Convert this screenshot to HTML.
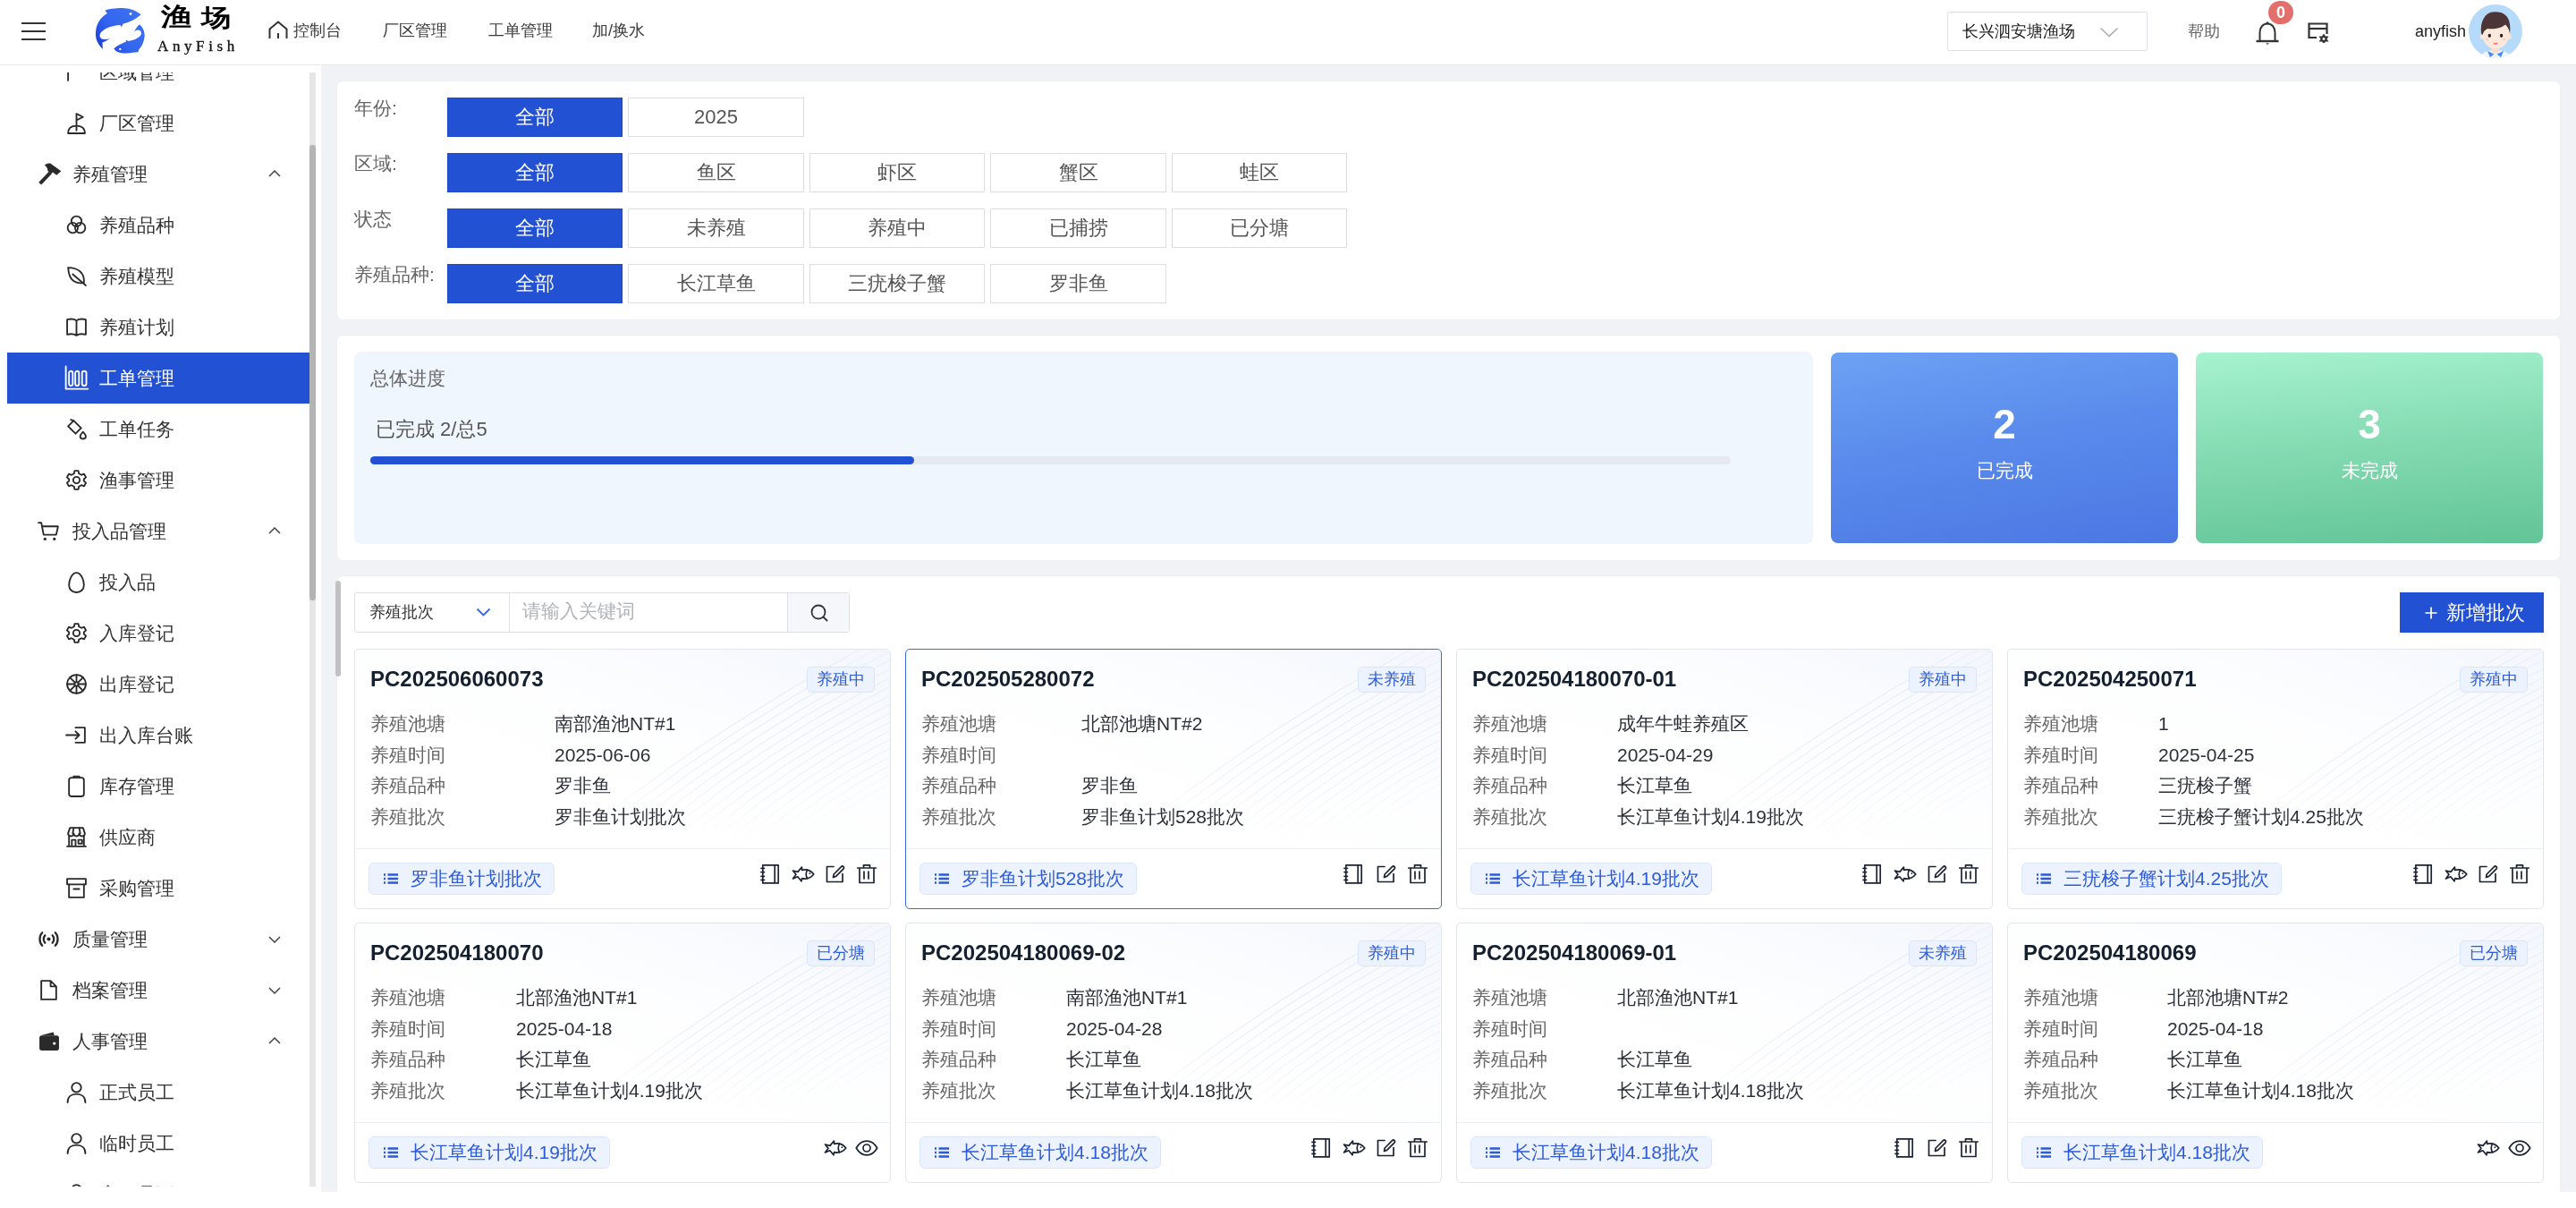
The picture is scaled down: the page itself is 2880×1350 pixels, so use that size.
<!DOCTYPE html><html><head><meta charset="utf-8"><title>AnyFish</title><style>
*{box-sizing:border-box;margin:0;padding:0}
html,body{width:2880px;height:1350px;overflow:hidden;background:#fff;font-family:"Liberation Sans",sans-serif;color:#333}
body{will-change:transform}
.a{position:absolute}
.hdr{left:0;top:0;width:2880px;height:72px;background:#fff;border-bottom:1px solid #e6e6e6;height:73px}
.ham{left:24px;width:27px;height:2.2px;background:#333}
.nav{top:20px;height:28px;line-height:28px;font-size:18px;color:#3a3a3a;white-space:nowrap}
.side{left:0;top:81px;width:359px;height:1245px;background:#fff;overflow:hidden}
.mi{left:0;width:346px;height:57px;font-size:21px;color:#333;white-space:nowrap}
.mi .t{position:absolute;top:0;line-height:57px}
.mi svg{position:absolute}
.mi.act{left:8px;width:338px;background:#2351d3;color:#fff}
.main{left:359px;top:73px;width:2521px;height:1259px;background:#f0f2f5;overflow:hidden}
.card{background:#fff;border-radius:6px;box-shadow:0 0 1px rgba(0,0,0,.08)}
.lbl{font-size:21px;color:#666;white-space:nowrap}
.fb{width:196px;height:44px;line-height:42px;text-align:center;font-size:22px;color:#555;border:1px solid #dedede;background:#fff;white-space:nowrap}
.fb.on{background:#2351d3;border-color:#1e49c9;color:#fff}
.bc{width:600px;height:291px;border:1px solid #e3e5e9;border-radius:5px;background:#fff;overflow:hidden}
.bc.sel{border-color:#3a68df}
.bt{left:17px;top:19px;line-height:28px;font-size:24px;font-weight:bold;color:#15202f;white-space:nowrap}
.st{top:19px;height:29px;line-height:27px;padding:0 10px;font-size:18px;color:#2d5ad6;background:#edf3fe;border:1px solid #d9e5fb;border-radius:5px;white-space:nowrap}
.rl{left:17px;font-size:21px;color:#666;line-height:30px;white-space:nowrap}
.rv{font-size:21px;color:#2b2f38;line-height:30px;white-space:nowrap}
.dv{left:0;top:222px;width:600px;height:1px;background:#eceef3}
.ft{left:15px;top:238px;height:36px;line-height:34px;padding:0 13px 0 46px;font-size:21px;color:#2d5ad6;background:#edf3fe;border:1px solid #dbe6fb;border-radius:6px;white-space:nowrap}
.ic{stroke:#1c2433;fill:none;stroke-width:1.7;stroke-linecap:round;stroke-linejoin:round}
</style></head><body>
<div class="a hdr"></div>
<div class="a ham" style="top:25.2px"></div>
<div class="a ham" style="top:34.2px"></div>
<div class="a ham" style="top:43.2px"></div>
<svg class="a" style="left:100px;top:4px" width="70" height="60" viewBox="100 4 70 60">
<defs><linearGradient id="lg" gradientUnits="userSpaceOnUse" x1="158" y1="12" x2="108" y2="52"><stop offset="0" stop-color="#3f73f3"/><stop offset="0.6" stop-color="#3264ee"/><stop offset="1" stop-color="#1c3dd8"/></linearGradient></defs>
<path fill="url(#lg)" d="M117.4 11.5 C122 10 131 8.8 139.7 9.2 C147 9.6 153 12.5 157.6 16.2 C152 21 145 25 137.8 26.4 L135.8 30.3 L134.5 27.9 C126 28.3 118 31 113.5 35.5 C110.5 39 111 42.5 114.9 43.7 C117.5 44.3 120.5 43.8 122.8 43.2 C120 45 117 46.5 114.4 47.4 L114.9 54.7 C109 49.5 106.5 43 107 36.3 C107.5 27 112 19.5 119.9 14.9 Z"/>
<path fill="url(#lg)" d="M127.3 54.5 C130 51.5 135 49 141 46.5 L140.7 44.5 L143.5 46 C148 45.5 153 43.5 156.5 40.5 C158.8 38.3 158.5 35 155.5 33.8 C153.5 33 151.5 34 150.2 35.8 C151 33 153 30 156.1 27.3 C160 31 162 36 161.6 40.5 C161 47 158.5 52 155.5 55 L154.3 58.2 L150 58.6 C144 60 136 60 132 58.2 C130 57.5 128.5 56 127.3 54.5 Z"/>
<circle cx="146" cy="15.5" r="1.4" fill="#fff"/><circle cx="134.3" cy="54.9" r="1.2" fill="#fff"/>
</svg>
<div class="a" style="left:180px;top:5px;font-family:'Liberation Serif',serif;font-weight:900;font-size:28px;line-height:28px;color:#000;transform:scale(1.24,1.0);transform-origin:0 0;white-space:nowrap">渔</div>
<div class="a" style="left:225px;top:7px;font-family:'Liberation Serif',serif;font-weight:900;font-size:28px;line-height:28px;color:#000;transform:scale(1.17,0.95);transform-origin:0 0;white-space:nowrap">场</div>
<div class="a" style="left:176px;top:42px;font-family:'Liberation Serif',serif;font-size:17px;line-height:20px;color:#111;letter-spacing:4.6px;-webkit-text-stroke:0.35px #111;white-space:nowrap">AnyFish</div>
<svg class="a" style="left:300px;top:23px" width="22" height="21" viewBox="0 0 22 21"><path d="M1.5 20 V9.5 L11 1.5 L20.5 9.5 V20 M11 14 V20" fill="none" stroke="#333" stroke-width="2"/></svg>
<div class="a nav" style="left:328px">控制台</div>
<div class="a nav" style="left:428px">厂区管理</div>
<div class="a nav" style="left:546px">工单管理</div>
<div class="a nav" style="left:662px">加/换水</div>
<div class="a" style="left:2177px;top:13px;width:224px;height:44px;border:1px solid #dcdfe6;border-radius:2px;background:#fff"></div>
<div class="a nav" style="left:2194px;top:21px;color:#222">长兴泗安塘渔场</div>
<svg class="a" style="left:2347px;top:30px" width="22" height="12" viewBox="0 0 22 12"><path d="M1.5 1.5 L11 10.5 L20.5 1.5" fill="none" stroke="#aaa" stroke-width="1.6"/></svg>
<div class="a nav" style="left:2446px;top:21px;color:#666">帮助</div>
<svg class="a" style="left:2521px;top:23px" width="28" height="28" viewBox="0 0 28 28"><path d="M5.5 22.5 V13.5 C5.5 7.5 9 3.5 14 3.5 C19 3.5 22.5 7.5 22.5 13.5 V22.5" fill="none" stroke="#333" stroke-width="2"/><path d="M1.5 23 H26.5" stroke="#333" stroke-width="2.4"/><circle cx="14" cy="2.8" r="1.5" fill="#333"/><path d="M12.3 25.3 H15.7 L14 27 Z" fill="#333"/></svg>
<div class="a" style="left:2536px;top:1px;width:28px;height:26px;border-radius:14px;background:#e36f6c;color:#fff;font-size:18px;font-weight:bold;text-align:center;line-height:27px">0</div>
<svg class="a" style="left:2580px;top:25px" width="25" height="23" viewBox="0 0 25 23"><path d="M10 17 H1.5 V1.5 H21.5 V13" fill="none" stroke="#333" stroke-width="2.2"/><path d="M1.5 7 H21.5" stroke="#333" stroke-width="2.2"/><path d="M18 12.5 L20 15.5 H23.5 L21.5 18.5 L23.5 21.5 H20 L18 24 L16 21.5 H12.5 L14.5 18.5 L12.5 15.5 H16 Z" fill="#333"/><circle cx="18" cy="18.5" r="1.4" fill="#fff"/></svg>
<div class="a nav" style="left:2700px;top:21px;color:#222">anyfish</div>
<svg class="a" style="left:2760px;top:5px" width="60" height="60" viewBox="0 0 60 60">
<defs><clipPath id="avc"><circle cx="30" cy="30" r="30"/></clipPath></defs>
<circle cx="30" cy="30" r="30" fill="#b6dbfa"/>
<g clip-path="url(#avc)">
<path d="M12 62 C13 55 19 51 30 51 C41 51 47 55 48 62 Z" fill="#eef5fd"/>
<path d="M21 52 L28.5 55.5 L24 59 Z M39 52 L31.5 55.5 L36 59 Z" fill="#4a8af0"/>
<path d="M26 46 H34 V53 L30 55 L26 53 Z" fill="#f6dccb"/>
<ellipse cx="14.8" cy="36" rx="2.2" ry="3" fill="#f8e2d2"/><ellipse cx="45.6" cy="36" rx="2.2" ry="3" fill="#f8e2d2"/>
<path d="M15 30 C15 18 21 14 30.2 14 C39.4 14 45.6 18 45.6 30 C45.6 42 39.4 49.5 30.2 49.5 C21 49.5 15 42 15 30 Z" fill="#fce9dc"/>
<path d="M14.2 33 C12 19 18.5 8.2 30 8.2 C41.5 8.2 48 16 46 32 C45 28 43.5 24.5 41 22.5 C37.5 26 29.5 28 21 27 C18.5 28.5 16.5 30 15.5 34 Z" fill="#4b3537"/>
<path d="M18 14 C20 11 23 9.5 26 9" stroke="#5e4446" stroke-width="1" fill="none"/>
<ellipse cx="23.3" cy="34.8" rx="1.7" ry="2.1" fill="#2b2323"/><ellipse cx="36.6" cy="34.8" rx="1.7" ry="2.1" fill="#2b2323"/>
<ellipse cx="20.5" cy="39" rx="2.2" ry="1.3" fill="#f7c9c0" opacity=".8"/><ellipse cx="39.5" cy="39" rx="2.2" ry="1.3" fill="#f7c9c0" opacity=".8"/>
<path d="M28.4 43.4 Q30.2 44.6 32 43.4" stroke="#ea6b6b" stroke-width="1.3" fill="none" stroke-linecap="round"/>
</g></svg>
<div class="a side">
<div class="a mi" style="top:-29px">
<svg style="left:73px;top:16px;overflow:visible" width="25" height="25" viewBox="0 0 24 24"><path d="M3 3 V21" stroke="#2a2a2a" fill="none" stroke-width="1.8" stroke-linecap="round" stroke-linejoin="round"/></svg>
<div class="t" style="left:111px">区域管理</div>
</div>
<div class="a mi" style="top:28px">
<svg style="left:73px;top:16px;overflow:visible" width="25" height="25" viewBox="0 0 24 24"><path d="M12 20 V2 L19 5.5 L12 9" stroke="#2a2a2a" fill="none" stroke-width="1.8" stroke-linecap="round" stroke-linejoin="round"/><path d="M3 23 C3 17 7 15 12 15 C17 15 21 17 21 23 Z" stroke="#2a2a2a" fill="none" stroke-width="1.8" stroke-linecap="round" stroke-linejoin="round"/></svg>
<div class="t" style="left:111px">厂区管理</div>
</div>
<div class="a mi" style="top:85px">
<svg style="left:42px;top:16px;overflow:visible" width="25" height="25" viewBox="0 0 24 24"><path d="M2.6 22.3 L13.6 10.6" stroke="#2a2a2a" stroke-width="3.8" stroke-linecap="butt"/><path d="M7.6 2.5 C9.5 1 12 0.4 13.9 0.6 L25.3 8.8 L20.3 13.3 L16.4 10.1 L14.5 12 L10.8 8.4 C11 6.3 9.8 4.2 7.6 2.5 Z" fill="#2a2a2a"/></svg>
<div class="t" style="left:81px">养殖管理</div>
<svg style="left:300px;top:24px" width="14" height="8" viewBox="0 0 14 8"><path d="M1 7 L7 1 L13 7" fill="none" stroke="#444" stroke-width="1.5"/></svg>
</div>
<div class="a mi" style="top:142px">
<svg style="left:73px;top:16px;overflow:visible" width="25" height="25" viewBox="0 0 24 24"><circle cx="12" cy="8" r="5.5" stroke="#2a2a2a" fill="none" stroke-width="1.8" stroke-linecap="round" stroke-linejoin="round"/><circle cx="8" cy="15" r="5.5" stroke="#2a2a2a" fill="none" stroke-width="1.8" stroke-linecap="round" stroke-linejoin="round"/><circle cx="16" cy="15" r="5.5" stroke="#2a2a2a" fill="none" stroke-width="1.8" stroke-linecap="round" stroke-linejoin="round"/></svg>
<div class="t" style="left:111px">养殖品种</div>
</div>
<div class="a mi" style="top:199px">
<svg style="left:73px;top:16px;overflow:visible" width="25" height="25" viewBox="0 0 24 24"><path d="M3 3 C14 3 21 9 20 19 C12 21 4 18 3 3 Z" stroke="#2a2a2a" fill="none" stroke-width="1.8" stroke-linecap="round" stroke-linejoin="round"/><path d="M8 10 L22 22" stroke="#2a2a2a" fill="none" stroke-width="1.8" stroke-linecap="round" stroke-linejoin="round"/></svg>
<div class="t" style="left:111px">养殖模型</div>
</div>
<div class="a mi" style="top:256px">
<svg style="left:73px;top:16px;overflow:visible" width="25" height="25" viewBox="0 0 24 24"><path d="M2 4 C6 3 9 3 12 5 C15 3 18 3 22 4 V20 C18 19 15 19 12 21 C9 19 6 19 2 20 Z M12 5 V21" stroke="#2a2a2a" fill="none" stroke-width="1.8" stroke-linecap="round" stroke-linejoin="round"/></svg>
<div class="t" style="left:111px">养殖计划</div>
</div>
<div class="a mi act" style="top:313px">
<svg style="left:65px;top:16px;overflow:visible" width="25" height="25" viewBox="0 0 24 24"><path d="M0.6 -0.6 V23.6 H24.3" stroke="#fff" fill="none" stroke-width="1.8" stroke-linecap="round" stroke-linejoin="round"/><rect x="4" y="4.6" width="4" height="15.6" rx="2" stroke="#fff" fill="none" stroke-width="1.8" stroke-linecap="round" stroke-linejoin="round"/><rect x="10.7" y="4.6" width="4" height="15.6" rx="2" stroke="#fff" fill="none" stroke-width="1.8" stroke-linecap="round" stroke-linejoin="round"/><rect x="18" y="4.6" width="4.6" height="15.6" rx="2.2" stroke="#fff" fill="none" stroke-width="1.8" stroke-linecap="round" stroke-linejoin="round"/></svg>
<div class="t" style="left:103px">工单管理</div>
</div>
<div class="a mi" style="top:370px">
<svg style="left:73px;top:16px;overflow:visible" width="25" height="25" viewBox="0 0 24 24"><path d="M3 9 L9 3 L17 11 L11 17 Z" stroke="#2a2a2a" fill="none" stroke-width="1.8" stroke-linecap="round" stroke-linejoin="round"/><path d="M9 3 L6 2" stroke="#2a2a2a" fill="none" stroke-width="1.8" stroke-linecap="round" stroke-linejoin="round"/><path d="M19 15 C19 15 22 18 22 20 C22 21.5 20.5 22.5 19 22.5 C17.5 22.5 16 21.5 16 20 C16 18 19 15 19 15 Z" stroke="#2a2a2a" fill="none" stroke-width="1.8" stroke-linecap="round" stroke-linejoin="round"/></svg>
<div class="t" style="left:111px">工单任务</div>
</div>
<div class="a mi" style="top:427px">
<svg style="left:73px;top:16px;overflow:visible" width="25" height="25" viewBox="0 0 24 24"><path d="M10 2 H14 L14.6 5 L17.3 6.5 L20.2 5.5 L22.2 9 L20 11 V13 L22.2 15 L20.2 18.5 L17.3 17.5 L14.6 19 L14 22 H10 L9.4 19 L6.7 17.5 L3.8 18.5 L1.8 15 L4 13 V11 L1.8 9 L3.8 5.5 L6.7 6.5 L9.4 5 Z" stroke="#2a2a2a" fill="none" stroke-width="1.8" stroke-linecap="round" stroke-linejoin="round"/><circle cx="12" cy="12" r="3.5" stroke="#2a2a2a" fill="none" stroke-width="1.8" stroke-linecap="round" stroke-linejoin="round"/></svg>
<div class="t" style="left:111px">渔事管理</div>
</div>
<div class="a mi" style="top:484px">
<svg style="left:42px;top:16px;overflow:visible" width="25" height="25" viewBox="0 0 24 24"><path d="M1 3 H4 L6.5 16 H20 L22 7 H5" stroke="#2a2a2a" fill="none" stroke-width="1.8" stroke-linecap="round" stroke-linejoin="round"/><circle cx="8" cy="20.5" r="1.6" fill="#2a2a2a"/><circle cx="18" cy="20.5" r="1.6" fill="#2a2a2a"/></svg>
<div class="t" style="left:81px">投入品管理</div>
<svg style="left:300px;top:24px" width="14" height="8" viewBox="0 0 14 8"><path d="M1 7 L7 1 L13 7" fill="none" stroke="#444" stroke-width="1.5"/></svg>
</div>
<div class="a mi" style="top:541px">
<svg style="left:73px;top:16px;overflow:visible" width="25" height="25" viewBox="0 0 24 24"><path d="M12 2 C17 2 20 10 20 15 C20 20 16.5 23 12 23 C7.5 23 4 20 4 15 C4 10 7 2 12 2 Z" stroke="#2a2a2a" fill="none" stroke-width="1.8" stroke-linecap="round" stroke-linejoin="round"/></svg>
<div class="t" style="left:111px">投入品</div>
</div>
<div class="a mi" style="top:598px">
<svg style="left:73px;top:16px;overflow:visible" width="25" height="25" viewBox="0 0 24 24"><path d="M10 2 H14 L14.6 5 L17.3 6.5 L20.2 5.5 L22.2 9 L20 11 V13 L22.2 15 L20.2 18.5 L17.3 17.5 L14.6 19 L14 22 H10 L9.4 19 L6.7 17.5 L3.8 18.5 L1.8 15 L4 13 V11 L1.8 9 L3.8 5.5 L6.7 6.5 L9.4 5 Z" stroke="#2a2a2a" fill="none" stroke-width="1.8" stroke-linecap="round" stroke-linejoin="round"/><circle cx="12" cy="12" r="3.5" stroke="#2a2a2a" fill="none" stroke-width="1.8" stroke-linecap="round" stroke-linejoin="round"/></svg>
<div class="t" style="left:111px">入库登记</div>
</div>
<div class="a mi" style="top:655px">
<svg style="left:73px;top:16px;overflow:visible" width="25" height="25" viewBox="0 0 24 24"><circle cx="12" cy="12" r="10" stroke="#2a2a2a" fill="none" stroke-width="1.8" stroke-linecap="round" stroke-linejoin="round"/><path d="M12 2 V22 M2 12 H22 M5 5 L19 19 M19 5 L5 19" stroke="#2a2a2a" fill="none" stroke-width="1.8" stroke-linecap="round" stroke-linejoin="round"/><circle cx="12" cy="12" r="2" fill="#fff" stroke="#2a2a2a" fill="none" stroke-width="1.8" stroke-linecap="round" stroke-linejoin="round"/></svg>
<div class="t" style="left:111px">出库登记</div>
</div>
<div class="a mi" style="top:712px">
<svg style="left:73px;top:16px;overflow:visible" width="25" height="25" viewBox="0 0 24 24"><path d="M11 4 H21 V20 H11" stroke="#2a2a2a" fill="none" stroke-width="1.8" stroke-linecap="round" stroke-linejoin="round"/><path d="M1 12 H15 M11 8 L15 12 L11 16" stroke="#2a2a2a" fill="none" stroke-width="1.8" stroke-linecap="round" stroke-linejoin="round"/></svg>
<div class="t" style="left:111px">出入库台账</div>
</div>
<div class="a mi" style="top:769px">
<svg style="left:73px;top:16px;overflow:visible" width="25" height="25" viewBox="0 0 24 24"><rect x="4" y="3" width="16" height="20" rx="2.5" stroke="#2a2a2a" fill="none" stroke-width="1.8" stroke-linecap="round" stroke-linejoin="round"/><path d="M9 3 V1.5 H15 V3" stroke="#2a2a2a" fill="none" stroke-width="1.8" stroke-linecap="round" stroke-linejoin="round"/></svg>
<div class="t" style="left:111px">库存管理</div>
</div>
<div class="a mi" style="top:826px">
<svg style="left:73px;top:16px;overflow:visible" width="25" height="25" viewBox="0 0 24 24"><path d="M3 8 L5 2 H19 L21 8 C21 10 19.5 11 18 11 C16.5 11 15 10 15 8 C15 10 13.5 11 12 11 C10.5 11 9 10 9 8 C9 10 7.5 11 6 11 C4.5 11 3 10 3 8 Z" stroke="#2a2a2a" fill="none" stroke-width="1.8" stroke-linecap="round" stroke-linejoin="round"/><path d="M4 11 V22 H20 V11 M2 22 H22 M7 22 V15 H11 V22 M14 15 H18 V19 H14 Z M9 2 L8 8 M15 2 L16 8" stroke="#2a2a2a" fill="none" stroke-width="1.8" stroke-linecap="round" stroke-linejoin="round"/></svg>
<div class="t" style="left:111px">供应商</div>
</div>
<div class="a mi" style="top:883px">
<svg style="left:73px;top:16px;overflow:visible" width="25" height="25" viewBox="0 0 24 24"><rect x="2" y="2" width="20" height="6" stroke="#2a2a2a" fill="none" stroke-width="1.8" stroke-linecap="round" stroke-linejoin="round"/><path d="M4 8 V22 H20 V8 M9 13 H15" stroke="#2a2a2a" fill="none" stroke-width="1.8" stroke-linecap="round" stroke-linejoin="round"/></svg>
<div class="t" style="left:111px">采购管理</div>
</div>
<div class="a mi" style="top:940px">
<svg style="left:42px;top:16px;overflow:visible" width="25" height="25" viewBox="0 0 24 24"><circle cx="12" cy="12" r="2" fill="#2a2a2a"/><path d="M8 8 C6 10 6 14 8 16 M16 8 C18 10 18 14 16 16 M5 5 C1.5 8.5 1.5 15.5 5 19 M19 5 C22.5 8.5 22.5 15.5 19 19" stroke="#2a2a2a" fill="none" stroke-width="2.2" stroke-linecap="round"/></svg>
<div class="t" style="left:81px">质量管理</div>
<svg style="left:300px;top:25px" width="14" height="8" viewBox="0 0 14 8"><path d="M1 1 L7 7 L13 1" fill="none" stroke="#444" stroke-width="1.5"/></svg>
</div>
<div class="a mi" style="top:997px">
<svg style="left:42px;top:16px;overflow:visible" width="25" height="25" viewBox="0 0 24 24"><path d="M4 2 H14 L20 8 V22 H4 Z M14 2 V8 H20" stroke="#2a2a2a" fill="none" stroke-width="1.8" stroke-linecap="round" stroke-linejoin="round"/></svg>
<div class="t" style="left:81px">档案管理</div>
<svg style="left:300px;top:25px" width="14" height="8" viewBox="0 0 14 8"><path d="M1 1 L7 7 L13 1" fill="none" stroke="#444" stroke-width="1.5"/></svg>
</div>
<div class="a mi" style="top:1054px">
<svg style="left:42px;top:16px;overflow:visible" width="25" height="25" viewBox="0 0 24 24"><path d="M3 6 L17 2.5 L18 6 Z" fill="#2a2a2a"/><rect x="2" y="6" width="21" height="16" rx="2.5" fill="#2a2a2a"/><circle cx="18" cy="14.5" r="1.6" fill="#fff"/></svg>
<div class="t" style="left:81px">人事管理</div>
<svg style="left:300px;top:24px" width="14" height="8" viewBox="0 0 14 8"><path d="M1 7 L7 1 L13 7" fill="none" stroke="#444" stroke-width="1.5"/></svg>
</div>
<div class="a mi" style="top:1111px">
<svg style="left:73px;top:16px;overflow:visible" width="25" height="25" viewBox="0 0 24 24"><circle cx="12" cy="7" r="5" stroke="#2a2a2a" fill="none" stroke-width="1.8" stroke-linecap="round" stroke-linejoin="round"/><path d="M2.5 23 C2.5 17 6.5 14 12 14 C17.5 14 21.5 17 21.5 23" stroke="#2a2a2a" fill="none" stroke-width="1.8" stroke-linecap="round" stroke-linejoin="round"/></svg>
<div class="t" style="left:111px">正式员工</div>
</div>
<div class="a mi" style="top:1168px">
<svg style="left:73px;top:16px;overflow:visible" width="25" height="25" viewBox="0 0 24 24"><circle cx="12" cy="7" r="5" stroke="#2a2a2a" fill="none" stroke-width="1.8" stroke-linecap="round" stroke-linejoin="round"/><path d="M2.5 23 C2.5 17 6.5 14 12 14 C17.5 14 21.5 17 21.5 23" stroke="#2a2a2a" fill="none" stroke-width="1.8" stroke-linecap="round" stroke-linejoin="round"/></svg>
<div class="t" style="left:111px">临时员工</div>
</div>
<div class="a mi" style="top:1225px">
<svg style="left:73px;top:16px;overflow:visible" width="25" height="25" viewBox="0 0 24 24"><circle cx="12" cy="7" r="5" stroke="#2a2a2a" fill="none" stroke-width="1.8" stroke-linecap="round" stroke-linejoin="round"/><path d="M2.5 23 C2.5 17 6.5 14 12 14 C17.5 14 21.5 17 21.5 23" stroke="#2a2a2a" fill="none" stroke-width="1.8" stroke-linecap="round" stroke-linejoin="round"/></svg>
<div class="t" style="left:111px">离职员工</div>
</div>
<div class="a" style="left:346px;top:0px;width:7px;height:1245px;background:#e6e6e6"></div>
<div class="a" style="left:346px;top:81px;width:7px;height:509px;background:#b4b4b4;border-radius:3px"></div>
</div>
<div class="a main">
<div class="a card" style="left:18px;top:18px;width:2485px;height:266px"></div>
<div class="a lbl" style="left:37px;top:35px;line-height:26px">年份:</div>
<div class="a fb on" style="left:141px;top:36px;width:196px">全部</div>
<div class="a fb" style="left:343px;top:36px;width:197px">2025</div>
<div class="a lbl" style="left:37px;top:97px;line-height:26px">区域:</div>
<div class="a fb on" style="left:141px;top:98px;width:196px">全部</div>
<div class="a fb" style="left:343px;top:98px;width:197px">鱼区</div>
<div class="a fb" style="left:546px;top:98px;width:196px">虾区</div>
<div class="a fb" style="left:748px;top:98px;width:197px">蟹区</div>
<div class="a fb" style="left:951px;top:98px;width:196px">蛙区</div>
<div class="a lbl" style="left:37px;top:159px;line-height:26px">状态</div>
<div class="a fb on" style="left:141px;top:160px;width:196px">全部</div>
<div class="a fb" style="left:343px;top:160px;width:197px">未养殖</div>
<div class="a fb" style="left:546px;top:160px;width:196px">养殖中</div>
<div class="a fb" style="left:748px;top:160px;width:197px">已捕捞</div>
<div class="a fb" style="left:951px;top:160px;width:196px">已分塘</div>
<div class="a lbl" style="left:37px;top:221px;line-height:26px">养殖品种:</div>
<div class="a fb on" style="left:141px;top:222px;width:196px">全部</div>
<div class="a fb" style="left:343px;top:222px;width:197px">长江草鱼</div>
<div class="a fb" style="left:546px;top:222px;width:196px">三疣梭子蟹</div>
<div class="a fb" style="left:748px;top:222px;width:197px">罗非鱼</div>
<div class="a card" style="left:18px;top:302px;width:2485px;height:251px"></div>
<div class="a" style="left:37px;top:320px;width:1631px;height:215px;background:#eff6fe;border-radius:8px"></div>
<div class="a" style="left:55px;top:336px;font-size:21px;line-height:28px;color:#666;white-space:nowrap">总体进度</div>
<div class="a" style="left:61px;top:392px;font-size:22px;line-height:30px;color:#555;white-space:nowrap">已完成 2/总5</div>
<div class="a" style="left:55px;top:437px;width:1521px;height:9px;background:#e6e9f1;border-radius:5px"></div>
<div class="a" style="left:55px;top:437px;width:608px;height:9px;background:#2351d3;border-radius:5px"></div>
<div class="a" style="left:1688px;top:321px;width:388px;height:213px;border-radius:8px;background:linear-gradient(170deg,#6ca2f4 0%,#5a8bec 45%,#4b77e3 100%)">
<div class="a" style="left:0;top:55px;width:388px;text-align:center;font-size:46px;font-weight:bold;color:#fff;line-height:50px">2</div>
<div class="a" style="left:0;top:118px;width:388px;text-align:center;font-size:21px;color:#fff;line-height:28px">已完成</div>
</div>
<div class="a" style="left:2096px;top:321px;width:388px;height:213px;border-radius:8px;background:linear-gradient(175deg,#a6f3cf 0%,#86dcb4 45%,#62c497 100%)">
<div class="a" style="left:0;top:55px;width:388px;text-align:center;font-size:46px;font-weight:bold;color:#fff;line-height:50px">3</div>
<div class="a" style="left:0;top:118px;width:388px;text-align:center;font-size:21px;color:#fff;line-height:28px">未完成</div>
</div>
<div class="a card" style="left:18px;top:571px;width:2485px;height:800px"></div>
<div class="a" style="left:37px;top:589px;width:554px;height:45px;border:1px solid #dcdfe6;border-radius:3px;background:#fff"></div>
<div class="a" style="left:210px;top:590px;width:1px;height:43px;background:#dcdfe6"></div>
<div class="a" style="left:521px;top:590px;width:69px;height:43px;background:#f5f7fa;border-left:1px solid #dcdfe6"></div>
<div class="a" style="left:54px;top:597px;font-size:18px;line-height:28px;color:#333;white-space:nowrap">养殖批次</div>
<svg class="a" style="left:173px;top:606px" width="17" height="10" viewBox="0 0 17 10"><path d="M1.5 1.5 L8.5 8.5 L15.5 1.5" fill="none" stroke="#3a66dc" stroke-width="1.8"/></svg>
<div class="a" style="left:225px;top:596px;font-size:21px;line-height:28px;color:#b0b3b8;white-space:nowrap">请输入关键词</div>
<svg class="a" style="left:547px;top:602px" width="20" height="20" viewBox="0 0 20 20"><circle cx="9" cy="9" r="7.5" fill="none" stroke="#333" stroke-width="1.8"/><path d="M14.5 14.5 L18.5 18.5" stroke="#333" stroke-width="1.8" stroke-linecap="round"/></svg>
<div class="a" style="left:2324px;top:589px;width:161px;height:45px;background:#2351d3;color:#fff;font-size:22px;line-height:45px;white-space:nowrap"><svg style="position:absolute;left:28px;top:16px" width="14" height="14" viewBox="0 0 14 14"><path d="M7 0.5 V13.5 M0.5 7 H13.5" stroke="#fff" stroke-width="1.7"/></svg><span style="position:absolute;left:52px;top:0">新增批次</span></div>
<div class="a" style="left:16px;top:576px;width:6px;height:107px;background:#c1c1c1;border-radius:3px"></div>
<div class="a bc" style="left:37px;top:652px">
<div class="a" style="left:0;top:0;width:600px;height:290px;background:linear-gradient(200deg,rgba(228,236,250,.45) 0%,rgba(240,245,252,.2) 30%,rgba(255,255,255,0) 55%)"></div>
<svg class="a" style="left:0;top:0" width="600" height="290" viewBox="0 0 600 290"><defs><radialGradient id="cm" cx="0.68" cy="0.25" r="0.5"><stop offset="0" stop-color="#fff" stop-opacity="1"/><stop offset="0.6" stop-color="#fff" stop-opacity="0.6"/><stop offset="1" stop-color="#fff" stop-opacity="0"/></radialGradient><mask id="cmk"><rect width="600" height="290" fill="url(#cm)"/></mask></defs><g fill="none" stroke="#d6dff0" stroke-width="1" opacity="0.75" mask="url(#cmk)"><path d="M150 300 Q330 120 620 -30"/><path d="M166 300 Q342 123 620 -20"/><path d="M182 300 Q354 126 620 -10"/><path d="M198 300 Q366 129 620 0"/><path d="M214 300 Q378 132 620 10"/><path d="M230 300 Q390 135 620 20"/><path d="M246 300 Q402 138 620 30"/><path d="M262 300 Q414 141 620 40"/><path d="M278 300 Q426 144 620 50"/><path d="M294 300 Q438 147 620 60"/><path d="M310 300 Q450 150 620 70"/><path d="M326 300 Q462 153 620 80"/><path d="M342 300 Q474 156 620 90"/><path d="M358 300 Q486 159 620 100"/><path d="M374 300 Q498 162 620 110"/><path d="M390 300 Q510 165 620 120"/><path d="M406 300 Q522 168 620 130"/><path d="M422 300 Q534 171 620 140"/></g></svg>
<div class="a bt">PC202506060073</div>
<div class="a st" style="right:17px">养殖中</div>
<div class="a rl" style="top:68.0px">养殖池塘</div>
<div class="a rv" style="left:223px;top:68.0px">南部渔池NT#1</div>
<div class="a rl" style="top:102.6px">养殖时间</div>
<div class="a rv" style="left:223px;top:102.6px">2025-06-06</div>
<div class="a rl" style="top:137.2px">养殖品种</div>
<div class="a rv" style="left:223px;top:137.2px">罗非鱼</div>
<div class="a rl" style="top:171.8px">养殖批次</div>
<div class="a rv" style="left:223px;top:171.8px">罗非鱼计划批次</div>
<div class="a dv"></div>
<div class="a ft">罗非鱼计划批次<svg style="position:absolute;left:16px;top:11px" width="16" height="12" viewBox="0 0 16 12"><path d="M0 1.5 H2 M0 6 H2 M0 10.5 H2" stroke="#2d5ad6" stroke-width="2.4"/><path d="M4.5 1.5 H16 M4.5 6 H16 M4.5 10.5 H16" stroke="#2d5ad6" stroke-width="2.4"/></svg></div>
<div class="a" style="left:449px;top:239px;width:30px;height:24px"><svg width="30" height="24" viewBox="0 0 30 24"><path d="M6.8 1.9 H24.2 V21.9 H6.8 Z M20.2 1.9 V21.9" class="ic"/><path d="M5 5.3 H8.5 M5 9.6 H8.5 M5 14.3 H8.5 M5 18.4 H8.5" class="ic"/></svg></div>
<div class="a" style="left:485px;top:239px;width:30px;height:24px"><svg width="30" height="24" viewBox="0 0 30 24"><path d="M4.5 8 L8 12.2 L4.5 17 L9.8 14.8 L14 19.8 L14.6 16.6 C15.8 16.9 16.8 17.1 18 17.1 C22.5 17.1 25.8 14.5 27.8 12 C25.8 9.5 22.5 6.9 18 6.9 C16.8 6.9 15.8 7.1 14.6 7.4 L14.4 4 L10 9.4 Z" class="ic"/><path d="M20.6 7.2 C19 10 19 14 20.6 16.8" class="ic"/><circle cx="23.4" cy="11.2" r="0.9" fill="#1c2433"/></svg></div>
<div class="a" style="left:521px;top:239px;width:30px;height:24px"><svg width="30" height="24" viewBox="0 0 30 24"><path d="M14 3.5 H6.5 V20.5 H24 V11.5" class="ic"/><path d="M13.5 15.5 L14.2 12 L22.5 3.7 C23.3 2.9 24.3 2.9 25 3.6 C25.7 4.3 25.7 5.3 24.9 6.1 L16.6 14.4 Z" class="ic"/></svg></div>
<div class="a" style="left:557px;top:239px;width:30px;height:24px"><svg width="30" height="24" viewBox="0 0 30 24"><path d="M4.8 5 H25.2 M11.5 5 V1.8 H18.5 V5 M7 5 V21.5 H23 V5 M12 9 V17 M17 9 V17" class="ic"/></svg></div>
</div>
<div class="a bc sel" style="left:653px;top:652px">
<div class="a" style="left:0;top:0;width:600px;height:290px;background:linear-gradient(200deg,rgba(228,236,250,.45) 0%,rgba(240,245,252,.2) 30%,rgba(255,255,255,0) 55%)"></div>
<svg class="a" style="left:0;top:0" width="600" height="290" viewBox="0 0 600 290"><defs><radialGradient id="cm" cx="0.68" cy="0.25" r="0.5"><stop offset="0" stop-color="#fff" stop-opacity="1"/><stop offset="0.6" stop-color="#fff" stop-opacity="0.6"/><stop offset="1" stop-color="#fff" stop-opacity="0"/></radialGradient><mask id="cmk"><rect width="600" height="290" fill="url(#cm)"/></mask></defs><g fill="none" stroke="#d6dff0" stroke-width="1" opacity="0.75" mask="url(#cmk)"><path d="M150 300 Q330 120 620 -30"/><path d="M166 300 Q342 123 620 -20"/><path d="M182 300 Q354 126 620 -10"/><path d="M198 300 Q366 129 620 0"/><path d="M214 300 Q378 132 620 10"/><path d="M230 300 Q390 135 620 20"/><path d="M246 300 Q402 138 620 30"/><path d="M262 300 Q414 141 620 40"/><path d="M278 300 Q426 144 620 50"/><path d="M294 300 Q438 147 620 60"/><path d="M310 300 Q450 150 620 70"/><path d="M326 300 Q462 153 620 80"/><path d="M342 300 Q474 156 620 90"/><path d="M358 300 Q486 159 620 100"/><path d="M374 300 Q498 162 620 110"/><path d="M390 300 Q510 165 620 120"/><path d="M406 300 Q522 168 620 130"/><path d="M422 300 Q534 171 620 140"/></g></svg>
<div class="a bt">PC202505280072</div>
<div class="a st" style="right:17px">未养殖</div>
<div class="a rl" style="top:68.0px">养殖池塘</div>
<div class="a rv" style="left:196px;top:68.0px">北部池塘NT#2</div>
<div class="a rl" style="top:102.6px">养殖时间</div>
<div class="a rl" style="top:137.2px">养殖品种</div>
<div class="a rv" style="left:196px;top:137.2px">罗非鱼</div>
<div class="a rl" style="top:171.8px">养殖批次</div>
<div class="a rv" style="left:196px;top:171.8px">罗非鱼计划528批次</div>
<div class="a dv"></div>
<div class="a ft">罗非鱼计划528批次<svg style="position:absolute;left:16px;top:11px" width="16" height="12" viewBox="0 0 16 12"><path d="M0 1.5 H2 M0 6 H2 M0 10.5 H2" stroke="#2d5ad6" stroke-width="2.4"/><path d="M4.5 1.5 H16 M4.5 6 H16 M4.5 10.5 H16" stroke="#2d5ad6" stroke-width="2.4"/></svg></div>
<div class="a" style="left:485px;top:239px;width:30px;height:24px"><svg width="30" height="24" viewBox="0 0 30 24"><path d="M6.8 1.9 H24.2 V21.9 H6.8 Z M20.2 1.9 V21.9" class="ic"/><path d="M5 5.3 H8.5 M5 9.6 H8.5 M5 14.3 H8.5 M5 18.4 H8.5" class="ic"/></svg></div>
<div class="a" style="left:521px;top:239px;width:30px;height:24px"><svg width="30" height="24" viewBox="0 0 30 24"><path d="M14 3.5 H6.5 V20.5 H24 V11.5" class="ic"/><path d="M13.5 15.5 L14.2 12 L22.5 3.7 C23.3 2.9 24.3 2.9 25 3.6 C25.7 4.3 25.7 5.3 24.9 6.1 L16.6 14.4 Z" class="ic"/></svg></div>
<div class="a" style="left:557px;top:239px;width:30px;height:24px"><svg width="30" height="24" viewBox="0 0 30 24"><path d="M4.8 5 H25.2 M11.5 5 V1.8 H18.5 V5 M7 5 V21.5 H23 V5 M12 9 V17 M17 9 V17" class="ic"/></svg></div>
</div>
<div class="a bc" style="left:1269px;top:652px">
<div class="a" style="left:0;top:0;width:600px;height:290px;background:linear-gradient(200deg,rgba(228,236,250,.45) 0%,rgba(240,245,252,.2) 30%,rgba(255,255,255,0) 55%)"></div>
<svg class="a" style="left:0;top:0" width="600" height="290" viewBox="0 0 600 290"><defs><radialGradient id="cm" cx="0.68" cy="0.25" r="0.5"><stop offset="0" stop-color="#fff" stop-opacity="1"/><stop offset="0.6" stop-color="#fff" stop-opacity="0.6"/><stop offset="1" stop-color="#fff" stop-opacity="0"/></radialGradient><mask id="cmk"><rect width="600" height="290" fill="url(#cm)"/></mask></defs><g fill="none" stroke="#d6dff0" stroke-width="1" opacity="0.75" mask="url(#cmk)"><path d="M150 300 Q330 120 620 -30"/><path d="M166 300 Q342 123 620 -20"/><path d="M182 300 Q354 126 620 -10"/><path d="M198 300 Q366 129 620 0"/><path d="M214 300 Q378 132 620 10"/><path d="M230 300 Q390 135 620 20"/><path d="M246 300 Q402 138 620 30"/><path d="M262 300 Q414 141 620 40"/><path d="M278 300 Q426 144 620 50"/><path d="M294 300 Q438 147 620 60"/><path d="M310 300 Q450 150 620 70"/><path d="M326 300 Q462 153 620 80"/><path d="M342 300 Q474 156 620 90"/><path d="M358 300 Q486 159 620 100"/><path d="M374 300 Q498 162 620 110"/><path d="M390 300 Q510 165 620 120"/><path d="M406 300 Q522 168 620 130"/><path d="M422 300 Q534 171 620 140"/></g></svg>
<div class="a bt">PC202504180070-01</div>
<div class="a st" style="right:17px">养殖中</div>
<div class="a rl" style="top:68.0px">养殖池塘</div>
<div class="a rv" style="left:179px;top:68.0px">成年牛蛙养殖区</div>
<div class="a rl" style="top:102.6px">养殖时间</div>
<div class="a rv" style="left:179px;top:102.6px">2025-04-29</div>
<div class="a rl" style="top:137.2px">养殖品种</div>
<div class="a rv" style="left:179px;top:137.2px">长江草鱼</div>
<div class="a rl" style="top:171.8px">养殖批次</div>
<div class="a rv" style="left:179px;top:171.8px">长江草鱼计划4.19批次</div>
<div class="a dv"></div>
<div class="a ft">长江草鱼计划4.19批次<svg style="position:absolute;left:16px;top:11px" width="16" height="12" viewBox="0 0 16 12"><path d="M0 1.5 H2 M0 6 H2 M0 10.5 H2" stroke="#2d5ad6" stroke-width="2.4"/><path d="M4.5 1.5 H16 M4.5 6 H16 M4.5 10.5 H16" stroke="#2d5ad6" stroke-width="2.4"/></svg></div>
<div class="a" style="left:449px;top:239px;width:30px;height:24px"><svg width="30" height="24" viewBox="0 0 30 24"><path d="M6.8 1.9 H24.2 V21.9 H6.8 Z M20.2 1.9 V21.9" class="ic"/><path d="M5 5.3 H8.5 M5 9.6 H8.5 M5 14.3 H8.5 M5 18.4 H8.5" class="ic"/></svg></div>
<div class="a" style="left:485px;top:239px;width:30px;height:24px"><svg width="30" height="24" viewBox="0 0 30 24"><path d="M4.5 8 L8 12.2 L4.5 17 L9.8 14.8 L14 19.8 L14.6 16.6 C15.8 16.9 16.8 17.1 18 17.1 C22.5 17.1 25.8 14.5 27.8 12 C25.8 9.5 22.5 6.9 18 6.9 C16.8 6.9 15.8 7.1 14.6 7.4 L14.4 4 L10 9.4 Z" class="ic"/><path d="M20.6 7.2 C19 10 19 14 20.6 16.8" class="ic"/><circle cx="23.4" cy="11.2" r="0.9" fill="#1c2433"/></svg></div>
<div class="a" style="left:521px;top:239px;width:30px;height:24px"><svg width="30" height="24" viewBox="0 0 30 24"><path d="M14 3.5 H6.5 V20.5 H24 V11.5" class="ic"/><path d="M13.5 15.5 L14.2 12 L22.5 3.7 C23.3 2.9 24.3 2.9 25 3.6 C25.7 4.3 25.7 5.3 24.9 6.1 L16.6 14.4 Z" class="ic"/></svg></div>
<div class="a" style="left:557px;top:239px;width:30px;height:24px"><svg width="30" height="24" viewBox="0 0 30 24"><path d="M4.8 5 H25.2 M11.5 5 V1.8 H18.5 V5 M7 5 V21.5 H23 V5 M12 9 V17 M17 9 V17" class="ic"/></svg></div>
</div>
<div class="a bc" style="left:1885px;top:652px">
<div class="a" style="left:0;top:0;width:600px;height:290px;background:linear-gradient(200deg,rgba(228,236,250,.45) 0%,rgba(240,245,252,.2) 30%,rgba(255,255,255,0) 55%)"></div>
<svg class="a" style="left:0;top:0" width="600" height="290" viewBox="0 0 600 290"><defs><radialGradient id="cm" cx="0.68" cy="0.25" r="0.5"><stop offset="0" stop-color="#fff" stop-opacity="1"/><stop offset="0.6" stop-color="#fff" stop-opacity="0.6"/><stop offset="1" stop-color="#fff" stop-opacity="0"/></radialGradient><mask id="cmk"><rect width="600" height="290" fill="url(#cm)"/></mask></defs><g fill="none" stroke="#d6dff0" stroke-width="1" opacity="0.75" mask="url(#cmk)"><path d="M150 300 Q330 120 620 -30"/><path d="M166 300 Q342 123 620 -20"/><path d="M182 300 Q354 126 620 -10"/><path d="M198 300 Q366 129 620 0"/><path d="M214 300 Q378 132 620 10"/><path d="M230 300 Q390 135 620 20"/><path d="M246 300 Q402 138 620 30"/><path d="M262 300 Q414 141 620 40"/><path d="M278 300 Q426 144 620 50"/><path d="M294 300 Q438 147 620 60"/><path d="M310 300 Q450 150 620 70"/><path d="M326 300 Q462 153 620 80"/><path d="M342 300 Q474 156 620 90"/><path d="M358 300 Q486 159 620 100"/><path d="M374 300 Q498 162 620 110"/><path d="M390 300 Q510 165 620 120"/><path d="M406 300 Q522 168 620 130"/><path d="M422 300 Q534 171 620 140"/></g></svg>
<div class="a bt">PC202504250071</div>
<div class="a st" style="right:17px">养殖中</div>
<div class="a rl" style="top:68.0px">养殖池塘</div>
<div class="a rv" style="left:168px;top:68.0px">1</div>
<div class="a rl" style="top:102.6px">养殖时间</div>
<div class="a rv" style="left:168px;top:102.6px">2025-04-25</div>
<div class="a rl" style="top:137.2px">养殖品种</div>
<div class="a rv" style="left:168px;top:137.2px">三疣梭子蟹</div>
<div class="a rl" style="top:171.8px">养殖批次</div>
<div class="a rv" style="left:168px;top:171.8px">三疣梭子蟹计划4.25批次</div>
<div class="a dv"></div>
<div class="a ft">三疣梭子蟹计划4.25批次<svg style="position:absolute;left:16px;top:11px" width="16" height="12" viewBox="0 0 16 12"><path d="M0 1.5 H2 M0 6 H2 M0 10.5 H2" stroke="#2d5ad6" stroke-width="2.4"/><path d="M4.5 1.5 H16 M4.5 6 H16 M4.5 10.5 H16" stroke="#2d5ad6" stroke-width="2.4"/></svg></div>
<div class="a" style="left:449px;top:239px;width:30px;height:24px"><svg width="30" height="24" viewBox="0 0 30 24"><path d="M6.8 1.9 H24.2 V21.9 H6.8 Z M20.2 1.9 V21.9" class="ic"/><path d="M5 5.3 H8.5 M5 9.6 H8.5 M5 14.3 H8.5 M5 18.4 H8.5" class="ic"/></svg></div>
<div class="a" style="left:485px;top:239px;width:30px;height:24px"><svg width="30" height="24" viewBox="0 0 30 24"><path d="M4.5 8 L8 12.2 L4.5 17 L9.8 14.8 L14 19.8 L14.6 16.6 C15.8 16.9 16.8 17.1 18 17.1 C22.5 17.1 25.8 14.5 27.8 12 C25.8 9.5 22.5 6.9 18 6.9 C16.8 6.9 15.8 7.1 14.6 7.4 L14.4 4 L10 9.4 Z" class="ic"/><path d="M20.6 7.2 C19 10 19 14 20.6 16.8" class="ic"/><circle cx="23.4" cy="11.2" r="0.9" fill="#1c2433"/></svg></div>
<div class="a" style="left:521px;top:239px;width:30px;height:24px"><svg width="30" height="24" viewBox="0 0 30 24"><path d="M14 3.5 H6.5 V20.5 H24 V11.5" class="ic"/><path d="M13.5 15.5 L14.2 12 L22.5 3.7 C23.3 2.9 24.3 2.9 25 3.6 C25.7 4.3 25.7 5.3 24.9 6.1 L16.6 14.4 Z" class="ic"/></svg></div>
<div class="a" style="left:557px;top:239px;width:30px;height:24px"><svg width="30" height="24" viewBox="0 0 30 24"><path d="M4.8 5 H25.2 M11.5 5 V1.8 H18.5 V5 M7 5 V21.5 H23 V5 M12 9 V17 M17 9 V17" class="ic"/></svg></div>
</div>
<div class="a bc" style="left:37px;top:958px">
<div class="a" style="left:0;top:0;width:600px;height:290px;background:linear-gradient(200deg,rgba(228,236,250,.45) 0%,rgba(240,245,252,.2) 30%,rgba(255,255,255,0) 55%)"></div>
<svg class="a" style="left:0;top:0" width="600" height="290" viewBox="0 0 600 290"><defs><radialGradient id="cm" cx="0.68" cy="0.25" r="0.5"><stop offset="0" stop-color="#fff" stop-opacity="1"/><stop offset="0.6" stop-color="#fff" stop-opacity="0.6"/><stop offset="1" stop-color="#fff" stop-opacity="0"/></radialGradient><mask id="cmk"><rect width="600" height="290" fill="url(#cm)"/></mask></defs><g fill="none" stroke="#d6dff0" stroke-width="1" opacity="0.75" mask="url(#cmk)"><path d="M150 300 Q330 120 620 -30"/><path d="M166 300 Q342 123 620 -20"/><path d="M182 300 Q354 126 620 -10"/><path d="M198 300 Q366 129 620 0"/><path d="M214 300 Q378 132 620 10"/><path d="M230 300 Q390 135 620 20"/><path d="M246 300 Q402 138 620 30"/><path d="M262 300 Q414 141 620 40"/><path d="M278 300 Q426 144 620 50"/><path d="M294 300 Q438 147 620 60"/><path d="M310 300 Q450 150 620 70"/><path d="M326 300 Q462 153 620 80"/><path d="M342 300 Q474 156 620 90"/><path d="M358 300 Q486 159 620 100"/><path d="M374 300 Q498 162 620 110"/><path d="M390 300 Q510 165 620 120"/><path d="M406 300 Q522 168 620 130"/><path d="M422 300 Q534 171 620 140"/></g></svg>
<div class="a bt">PC202504180070</div>
<div class="a st" style="right:17px">已分塘</div>
<div class="a rl" style="top:68.0px">养殖池塘</div>
<div class="a rv" style="left:180px;top:68.0px">北部渔池NT#1</div>
<div class="a rl" style="top:102.6px">养殖时间</div>
<div class="a rv" style="left:180px;top:102.6px">2025-04-18</div>
<div class="a rl" style="top:137.2px">养殖品种</div>
<div class="a rv" style="left:180px;top:137.2px">长江草鱼</div>
<div class="a rl" style="top:171.8px">养殖批次</div>
<div class="a rv" style="left:180px;top:171.8px">长江草鱼计划4.19批次</div>
<div class="a dv"></div>
<div class="a ft">长江草鱼计划4.19批次<svg style="position:absolute;left:16px;top:11px" width="16" height="12" viewBox="0 0 16 12"><path d="M0 1.5 H2 M0 6 H2 M0 10.5 H2" stroke="#2d5ad6" stroke-width="2.4"/><path d="M4.5 1.5 H16 M4.5 6 H16 M4.5 10.5 H16" stroke="#2d5ad6" stroke-width="2.4"/></svg></div>
<div class="a" style="left:521px;top:239px;width:30px;height:24px"><svg width="30" height="24" viewBox="0 0 30 24"><path d="M4.5 8 L8 12.2 L4.5 17 L9.8 14.8 L14 19.8 L14.6 16.6 C15.8 16.9 16.8 17.1 18 17.1 C22.5 17.1 25.8 14.5 27.8 12 C25.8 9.5 22.5 6.9 18 6.9 C16.8 6.9 15.8 7.1 14.6 7.4 L14.4 4 L10 9.4 Z" class="ic"/><path d="M20.6 7.2 C19 10 19 14 20.6 16.8" class="ic"/><circle cx="23.4" cy="11.2" r="0.9" fill="#1c2433"/></svg></div>
<div class="a" style="left:557px;top:239px;width:30px;height:24px"><svg width="30" height="24" viewBox="0 0 30 24"><path d="M3.3 12 C6.5 6.5 10.5 4.2 15 4.2 C19.5 4.2 23.5 6.5 26.7 12 C23.5 17.5 19.5 19.8 15 19.8 C10.5 19.8 6.5 17.5 3.3 12 Z" class="ic"/><circle cx="15" cy="12" r="4" class="ic"/></svg></div>
</div>
<div class="a bc" style="left:653px;top:958px">
<div class="a" style="left:0;top:0;width:600px;height:290px;background:linear-gradient(200deg,rgba(228,236,250,.45) 0%,rgba(240,245,252,.2) 30%,rgba(255,255,255,0) 55%)"></div>
<svg class="a" style="left:0;top:0" width="600" height="290" viewBox="0 0 600 290"><defs><radialGradient id="cm" cx="0.68" cy="0.25" r="0.5"><stop offset="0" stop-color="#fff" stop-opacity="1"/><stop offset="0.6" stop-color="#fff" stop-opacity="0.6"/><stop offset="1" stop-color="#fff" stop-opacity="0"/></radialGradient><mask id="cmk"><rect width="600" height="290" fill="url(#cm)"/></mask></defs><g fill="none" stroke="#d6dff0" stroke-width="1" opacity="0.75" mask="url(#cmk)"><path d="M150 300 Q330 120 620 -30"/><path d="M166 300 Q342 123 620 -20"/><path d="M182 300 Q354 126 620 -10"/><path d="M198 300 Q366 129 620 0"/><path d="M214 300 Q378 132 620 10"/><path d="M230 300 Q390 135 620 20"/><path d="M246 300 Q402 138 620 30"/><path d="M262 300 Q414 141 620 40"/><path d="M278 300 Q426 144 620 50"/><path d="M294 300 Q438 147 620 60"/><path d="M310 300 Q450 150 620 70"/><path d="M326 300 Q462 153 620 80"/><path d="M342 300 Q474 156 620 90"/><path d="M358 300 Q486 159 620 100"/><path d="M374 300 Q498 162 620 110"/><path d="M390 300 Q510 165 620 120"/><path d="M406 300 Q522 168 620 130"/><path d="M422 300 Q534 171 620 140"/></g></svg>
<div class="a bt">PC202504180069-02</div>
<div class="a st" style="right:17px">养殖中</div>
<div class="a rl" style="top:68.0px">养殖池塘</div>
<div class="a rv" style="left:179px;top:68.0px">南部渔池NT#1</div>
<div class="a rl" style="top:102.6px">养殖时间</div>
<div class="a rv" style="left:179px;top:102.6px">2025-04-28</div>
<div class="a rl" style="top:137.2px">养殖品种</div>
<div class="a rv" style="left:179px;top:137.2px">长江草鱼</div>
<div class="a rl" style="top:171.8px">养殖批次</div>
<div class="a rv" style="left:179px;top:171.8px">长江草鱼计划4.18批次</div>
<div class="a dv"></div>
<div class="a ft">长江草鱼计划4.18批次<svg style="position:absolute;left:16px;top:11px" width="16" height="12" viewBox="0 0 16 12"><path d="M0 1.5 H2 M0 6 H2 M0 10.5 H2" stroke="#2d5ad6" stroke-width="2.4"/><path d="M4.5 1.5 H16 M4.5 6 H16 M4.5 10.5 H16" stroke="#2d5ad6" stroke-width="2.4"/></svg></div>
<div class="a" style="left:449px;top:239px;width:30px;height:24px"><svg width="30" height="24" viewBox="0 0 30 24"><path d="M6.8 1.9 H24.2 V21.9 H6.8 Z M20.2 1.9 V21.9" class="ic"/><path d="M5 5.3 H8.5 M5 9.6 H8.5 M5 14.3 H8.5 M5 18.4 H8.5" class="ic"/></svg></div>
<div class="a" style="left:485px;top:239px;width:30px;height:24px"><svg width="30" height="24" viewBox="0 0 30 24"><path d="M4.5 8 L8 12.2 L4.5 17 L9.8 14.8 L14 19.8 L14.6 16.6 C15.8 16.9 16.8 17.1 18 17.1 C22.5 17.1 25.8 14.5 27.8 12 C25.8 9.5 22.5 6.9 18 6.9 C16.8 6.9 15.8 7.1 14.6 7.4 L14.4 4 L10 9.4 Z" class="ic"/><path d="M20.6 7.2 C19 10 19 14 20.6 16.8" class="ic"/><circle cx="23.4" cy="11.2" r="0.9" fill="#1c2433"/></svg></div>
<div class="a" style="left:521px;top:239px;width:30px;height:24px"><svg width="30" height="24" viewBox="0 0 30 24"><path d="M14 3.5 H6.5 V20.5 H24 V11.5" class="ic"/><path d="M13.5 15.5 L14.2 12 L22.5 3.7 C23.3 2.9 24.3 2.9 25 3.6 C25.7 4.3 25.7 5.3 24.9 6.1 L16.6 14.4 Z" class="ic"/></svg></div>
<div class="a" style="left:557px;top:239px;width:30px;height:24px"><svg width="30" height="24" viewBox="0 0 30 24"><path d="M4.8 5 H25.2 M11.5 5 V1.8 H18.5 V5 M7 5 V21.5 H23 V5 M12 9 V17 M17 9 V17" class="ic"/></svg></div>
</div>
<div class="a bc" style="left:1269px;top:958px">
<div class="a" style="left:0;top:0;width:600px;height:290px;background:linear-gradient(200deg,rgba(228,236,250,.45) 0%,rgba(240,245,252,.2) 30%,rgba(255,255,255,0) 55%)"></div>
<svg class="a" style="left:0;top:0" width="600" height="290" viewBox="0 0 600 290"><defs><radialGradient id="cm" cx="0.68" cy="0.25" r="0.5"><stop offset="0" stop-color="#fff" stop-opacity="1"/><stop offset="0.6" stop-color="#fff" stop-opacity="0.6"/><stop offset="1" stop-color="#fff" stop-opacity="0"/></radialGradient><mask id="cmk"><rect width="600" height="290" fill="url(#cm)"/></mask></defs><g fill="none" stroke="#d6dff0" stroke-width="1" opacity="0.75" mask="url(#cmk)"><path d="M150 300 Q330 120 620 -30"/><path d="M166 300 Q342 123 620 -20"/><path d="M182 300 Q354 126 620 -10"/><path d="M198 300 Q366 129 620 0"/><path d="M214 300 Q378 132 620 10"/><path d="M230 300 Q390 135 620 20"/><path d="M246 300 Q402 138 620 30"/><path d="M262 300 Q414 141 620 40"/><path d="M278 300 Q426 144 620 50"/><path d="M294 300 Q438 147 620 60"/><path d="M310 300 Q450 150 620 70"/><path d="M326 300 Q462 153 620 80"/><path d="M342 300 Q474 156 620 90"/><path d="M358 300 Q486 159 620 100"/><path d="M374 300 Q498 162 620 110"/><path d="M390 300 Q510 165 620 120"/><path d="M406 300 Q522 168 620 130"/><path d="M422 300 Q534 171 620 140"/></g></svg>
<div class="a bt">PC202504180069-01</div>
<div class="a st" style="right:17px">未养殖</div>
<div class="a rl" style="top:68.0px">养殖池塘</div>
<div class="a rv" style="left:179px;top:68.0px">北部渔池NT#1</div>
<div class="a rl" style="top:102.6px">养殖时间</div>
<div class="a rl" style="top:137.2px">养殖品种</div>
<div class="a rv" style="left:179px;top:137.2px">长江草鱼</div>
<div class="a rl" style="top:171.8px">养殖批次</div>
<div class="a rv" style="left:179px;top:171.8px">长江草鱼计划4.18批次</div>
<div class="a dv"></div>
<div class="a ft">长江草鱼计划4.18批次<svg style="position:absolute;left:16px;top:11px" width="16" height="12" viewBox="0 0 16 12"><path d="M0 1.5 H2 M0 6 H2 M0 10.5 H2" stroke="#2d5ad6" stroke-width="2.4"/><path d="M4.5 1.5 H16 M4.5 6 H16 M4.5 10.5 H16" stroke="#2d5ad6" stroke-width="2.4"/></svg></div>
<div class="a" style="left:485px;top:239px;width:30px;height:24px"><svg width="30" height="24" viewBox="0 0 30 24"><path d="M6.8 1.9 H24.2 V21.9 H6.8 Z M20.2 1.9 V21.9" class="ic"/><path d="M5 5.3 H8.5 M5 9.6 H8.5 M5 14.3 H8.5 M5 18.4 H8.5" class="ic"/></svg></div>
<div class="a" style="left:521px;top:239px;width:30px;height:24px"><svg width="30" height="24" viewBox="0 0 30 24"><path d="M14 3.5 H6.5 V20.5 H24 V11.5" class="ic"/><path d="M13.5 15.5 L14.2 12 L22.5 3.7 C23.3 2.9 24.3 2.9 25 3.6 C25.7 4.3 25.7 5.3 24.9 6.1 L16.6 14.4 Z" class="ic"/></svg></div>
<div class="a" style="left:557px;top:239px;width:30px;height:24px"><svg width="30" height="24" viewBox="0 0 30 24"><path d="M4.8 5 H25.2 M11.5 5 V1.8 H18.5 V5 M7 5 V21.5 H23 V5 M12 9 V17 M17 9 V17" class="ic"/></svg></div>
</div>
<div class="a bc" style="left:1885px;top:958px">
<div class="a" style="left:0;top:0;width:600px;height:290px;background:linear-gradient(200deg,rgba(228,236,250,.45) 0%,rgba(240,245,252,.2) 30%,rgba(255,255,255,0) 55%)"></div>
<svg class="a" style="left:0;top:0" width="600" height="290" viewBox="0 0 600 290"><defs><radialGradient id="cm" cx="0.68" cy="0.25" r="0.5"><stop offset="0" stop-color="#fff" stop-opacity="1"/><stop offset="0.6" stop-color="#fff" stop-opacity="0.6"/><stop offset="1" stop-color="#fff" stop-opacity="0"/></radialGradient><mask id="cmk"><rect width="600" height="290" fill="url(#cm)"/></mask></defs><g fill="none" stroke="#d6dff0" stroke-width="1" opacity="0.75" mask="url(#cmk)"><path d="M150 300 Q330 120 620 -30"/><path d="M166 300 Q342 123 620 -20"/><path d="M182 300 Q354 126 620 -10"/><path d="M198 300 Q366 129 620 0"/><path d="M214 300 Q378 132 620 10"/><path d="M230 300 Q390 135 620 20"/><path d="M246 300 Q402 138 620 30"/><path d="M262 300 Q414 141 620 40"/><path d="M278 300 Q426 144 620 50"/><path d="M294 300 Q438 147 620 60"/><path d="M310 300 Q450 150 620 70"/><path d="M326 300 Q462 153 620 80"/><path d="M342 300 Q474 156 620 90"/><path d="M358 300 Q486 159 620 100"/><path d="M374 300 Q498 162 620 110"/><path d="M390 300 Q510 165 620 120"/><path d="M406 300 Q522 168 620 130"/><path d="M422 300 Q534 171 620 140"/></g></svg>
<div class="a bt">PC202504180069</div>
<div class="a st" style="right:17px">已分塘</div>
<div class="a rl" style="top:68.0px">养殖池塘</div>
<div class="a rv" style="left:178px;top:68.0px">北部池塘NT#2</div>
<div class="a rl" style="top:102.6px">养殖时间</div>
<div class="a rv" style="left:178px;top:102.6px">2025-04-18</div>
<div class="a rl" style="top:137.2px">养殖品种</div>
<div class="a rv" style="left:178px;top:137.2px">长江草鱼</div>
<div class="a rl" style="top:171.8px">养殖批次</div>
<div class="a rv" style="left:178px;top:171.8px">长江草鱼计划4.18批次</div>
<div class="a dv"></div>
<div class="a ft">长江草鱼计划4.18批次<svg style="position:absolute;left:16px;top:11px" width="16" height="12" viewBox="0 0 16 12"><path d="M0 1.5 H2 M0 6 H2 M0 10.5 H2" stroke="#2d5ad6" stroke-width="2.4"/><path d="M4.5 1.5 H16 M4.5 6 H16 M4.5 10.5 H16" stroke="#2d5ad6" stroke-width="2.4"/></svg></div>
<div class="a" style="left:521px;top:239px;width:30px;height:24px"><svg width="30" height="24" viewBox="0 0 30 24"><path d="M4.5 8 L8 12.2 L4.5 17 L9.8 14.8 L14 19.8 L14.6 16.6 C15.8 16.9 16.8 17.1 18 17.1 C22.5 17.1 25.8 14.5 27.8 12 C25.8 9.5 22.5 6.9 18 6.9 C16.8 6.9 15.8 7.1 14.6 7.4 L14.4 4 L10 9.4 Z" class="ic"/><path d="M20.6 7.2 C19 10 19 14 20.6 16.8" class="ic"/><circle cx="23.4" cy="11.2" r="0.9" fill="#1c2433"/></svg></div>
<div class="a" style="left:557px;top:239px;width:30px;height:24px"><svg width="30" height="24" viewBox="0 0 30 24"><path d="M3.3 12 C6.5 6.5 10.5 4.2 15 4.2 C19.5 4.2 23.5 6.5 26.7 12 C23.5 17.5 19.5 19.8 15 19.8 C10.5 19.8 6.5 17.5 3.3 12 Z" class="ic"/><circle cx="15" cy="12" r="4" class="ic"/></svg></div>
</div>
</div>
</body></html>
